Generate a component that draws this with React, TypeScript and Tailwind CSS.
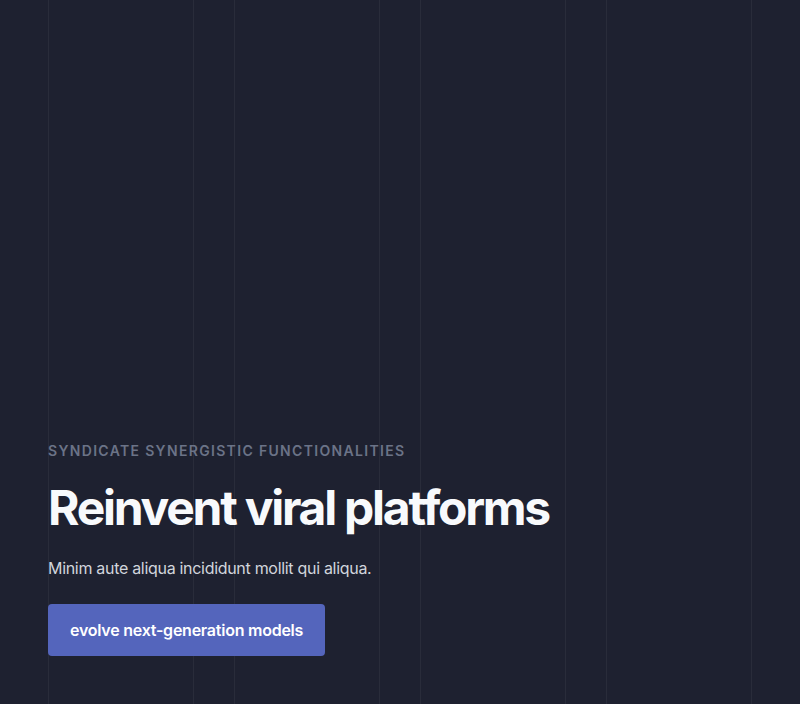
import React from "react";

const GridLines = () => (
  <div className="pointer-events-none absolute inset-0 grid grid-cols-4 gap-10 px-12">
    {[0, 1, 2, 3].map((i) => (
      <div key={i} className="border-x border-white/[0.05]" />
    ))}
  </div>
);

export default function App() {
  return (
    <div
      className="relative h-[704px] w-full overflow-hidden bg-[#1e2130]"
      style={{ fontFamily: "Inter, 'Noto Sans', sans-serif" }}
    >
      <GridLines />
      <div className="relative flex h-full flex-col justify-end px-12 pb-12">
        <p className="text-sm font-semibold uppercase tracking-[0.095em] text-[#6b7387]">
          Syndicate synergistic functionalities
        </p>
        <h1 className="mt-[23px] text-5xl font-bold tracking-[-0.047em] text-[#f8fafc]">
          Reinvent viral platforms
        </h1>
        <p className="mt-6 text-base tracking-[-0.019em] text-gray-300">
          Minim aute aliqua incididunt mollit qui aliqua.
        </p>
        <div className="mt-6">
          <button className="h-[52px] rounded-sm bg-[#5465bc] px-[22px] text-base font-semibold tracking-[-0.015em] text-white">
            evolve next-generation models
          </button>
        </div>
      </div>
    </div>
  );
}
